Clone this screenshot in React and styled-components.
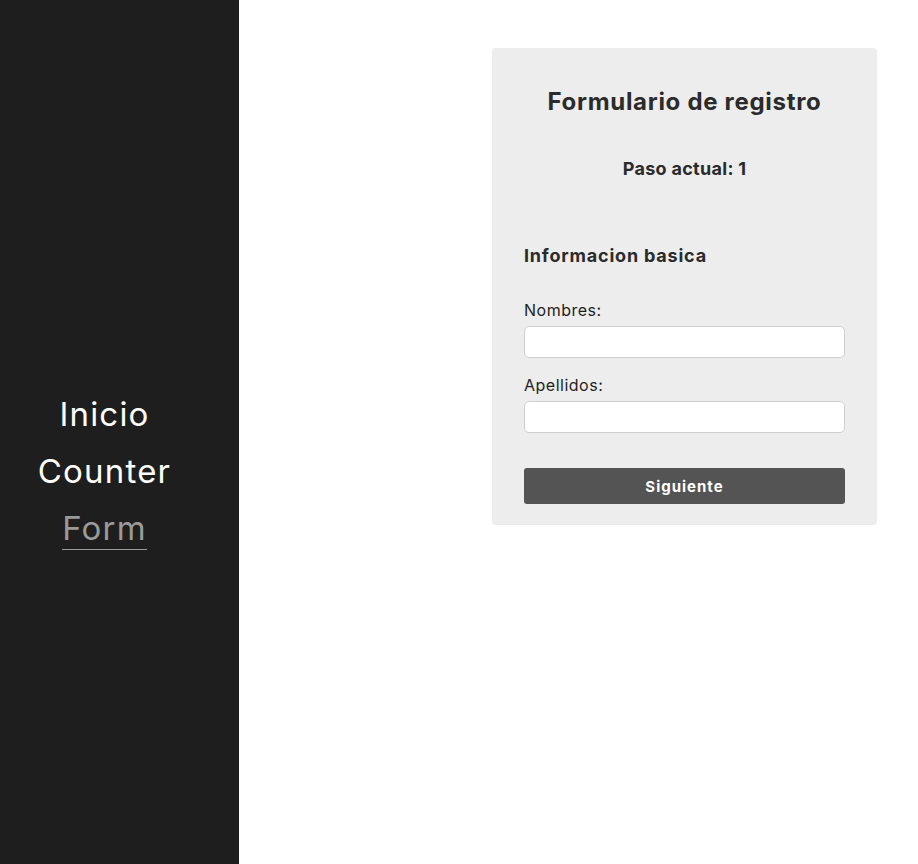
import React from "react";
import styled, { createGlobalStyle } from "styled-components";

const Global = createGlobalStyle`
  html, body { margin: 0; padding: 0; height: 100%; }
  body { font-family: Inter, "Noto Sans", sans-serif; background: #fff; }
  #root { height: 100%; }
`;

const Layout = styled.div`
  display: flex;
  min-height: 864px;
`;

const Sidebar = styled.nav`
  width: 239px;
  flex-shrink: 0;
  background: #1e1e1e;
  display: flex;
  flex-direction: column;
  justify-content: center;
  align-items: center;
  padding: 78px 30px 0 0;
  box-sizing: border-box;
  gap: 14px;
`;

const NavLink = styled.a`
  font-size: 33px;
  line-height: 42px;
  color: ${p => (p.$active ? "#9a9a9a" : "#ffffff")};
  text-decoration: none;
  border-bottom: 1px solid ${p => (p.$active ? "#9a9a9a" : "transparent")};
  letter-spacing: 1.2px;
`;

const Main = styled.main`
  flex: 1;
  display: flex;
  justify-content: flex-end;
  align-items: flex-start;
  padding: 48px 41px 0 0;
`;

const Card = styled.section`
  width: 385px;
  box-sizing: border-box;
  background: #ededed;
  border-radius: 4px;
  padding: 39px 32px 21px;
  color: #2b2b2b;
`;

const Title = styled.h1`
  margin: 0;
  text-align: center;
  font-size: 24px;
  font-weight: 700;
  line-height: 30px;
  letter-spacing: 0.7px;
`;

const Step = styled.h2`
  margin: 40px 0 0;
  text-align: center;
  font-size: 18px;
  font-weight: 700;
  line-height: 24px;
  letter-spacing: 0.3px;
`;

const Section = styled.h3`
  margin: 63px 0 0;
  font-size: 18px;
  font-weight: 700;
  line-height: 24px;
  letter-spacing: 0.8px;
`;

const Fields = styled.div`
  margin-top: 32px;
  display: flex;
  flex-direction: column;
  gap: 17px;
`;

const Label = styled.label`
  display: block;
  font-size: 16px;
  line-height: 20px;
  color: #1f1f1f;
  margin-bottom: 6px;
  letter-spacing: 0.5px;
`;

const Input = styled.input`
  display: block;
  width: 100%;
  box-sizing: border-box;
  height: 32px;
  border: 1px solid #cfcfcf;
  border-radius: 5px;
  background: #fff;
  font: inherit;
  padding: 0 8px;
`;

const Button = styled.button`
  display: block;
  width: 100%;
  height: 36px;
  margin-top: 35px;
  border: none;
  border-radius: 3px;
  background: #545454;
  color: #fff;
  font-family: inherit;
  font-size: 15px;
  font-weight: 700;
  letter-spacing: 1px;
`;

export default function App() {
  return (
    <>
      <Global />
      <Layout>
        <Sidebar>
          <NavLink href="#">Inicio</NavLink>
          <NavLink href="#">Counter</NavLink>
          <NavLink href="#" $active>Form</NavLink>
        </Sidebar>
        <Main>
          <Card>
            <Title>Formulario de registro</Title>
            <Step>Paso actual: 1</Step>
            <Section>Informacion basica</Section>
            <Fields>
              <div>
                <Label>Nombres:</Label>
                <Input type="text" />
              </div>
              <div>
                <Label>Apellidos:</Label>
                <Input type="text" />
              </div>
            </Fields>
            <Button>Siguiente</Button>
          </Card>
        </Main>
      </Layout>
    </>
  );
}
